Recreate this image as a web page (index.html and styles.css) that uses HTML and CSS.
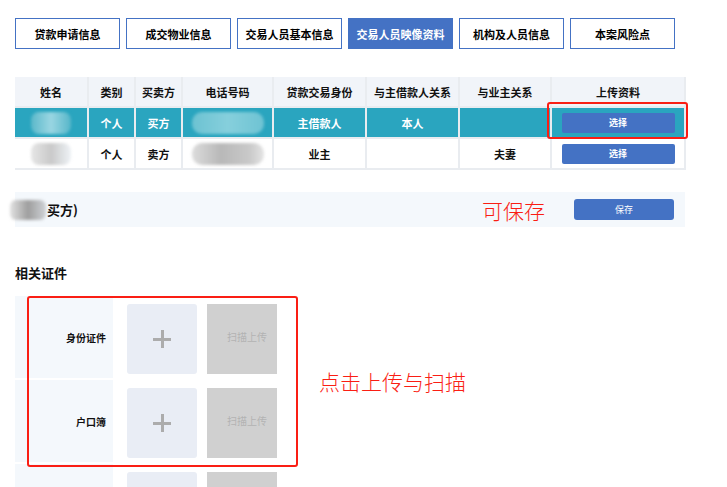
FILE: index.html
```html
<!DOCTYPE html>
<html lang="zh">
<head>
    <meta charset="UTF-8">
    <title>交易人员映像资料</title>
    <link rel="stylesheet" href="styles.css">
</head>
<body>
    <div class="tabs">
        <div class="tab">贷款申请信息</div>
        <div class="tab">成交物业信息</div>
        <div class="tab">交易人员基本信息</div>
        <div class="tab active">交易人员映像资料</div>
        <div class="tab">机构及人员信息</div>
        <div class="tab">本案风险点</div>
    </div>

    <div class="table-wrap">
        <table class="people">
            <colgroup>
                <col style="width:73px"><col style="width:47px"><col style="width:47px"><col style="width:91px">
                <col style="width:93px"><col style="width:93px"><col style="width:92px"><col style="width:134px">
            </colgroup>
            <tr>
                <th>姓名</th><th>类别</th><th>买卖方</th><th>电话号码</th>
                <th>贷款交易身份</th><th>与主借款人关系</th><th>与业主关系</th><th>上传资料</th>
            </tr>
            <tr class="selected">
                <td><span class="blur name-blur teal"></span></td>
                <td>个人</td><td>买方</td>
                <td><span class="blur phone-blur teal"></span></td>
                <td>主借款人</td><td>本人</td><td></td>
                <td><button class="btn">选择</button></td>
            </tr>
            <tr>
                <td><span class="blur name-blur"></span></td>
                <td>个人</td><td>卖方</td>
                <td><span class="blur phone-blur"></span></td>
                <td>业主</td><td></td><td>夫妻</td>
                <td><button class="btn">选择</button></td>
            </tr>
        </table>
        <div class="mark mark-btn"></div>
    </div>

    <div class="bar">
        <div class="bar-name"><span class="blur small-blur"></span>买方)</div>
        <div class="note note-save">可保存</div>
        <button class="btn btn-save">保存</button>
    </div>

    <h4 class="heading">相关证件</h4>

    <div class="cert-area">
        <div class="certs">
            <div class="cert-row">
                <div class="cert-label">身份证件</div>
                <div class="plus-box"><span class="plus"></span></div>
                <div class="scan-box">扫描上传</div>
            </div>
            <div class="cert-row">
                <div class="cert-label">户口簿</div>
                <div class="plus-box"><span class="plus"></span></div>
                <div class="scan-box">扫描上传</div>
            </div>
            <div class="cert-row">
                <div class="cert-label"></div>
                <div class="plus-box"><span class="plus"></span></div>
                <div class="scan-box"></div>
            </div>
            <div class="mark mark-certs"></div>
        </div>
        <div class="note note-upload">点击上传与扫描</div>
    </div>
</body>
</html>
```

FILE: styles.css
```css
body {
    margin: 0;
    padding: 18px 15px 0 15px;
    font-family: "Noto Sans CJK SC", "Liberation Sans", sans-serif;
    background-color: #fff;
    color: #111;
    overflow: hidden;
}

.tabs {
    display: flex;
    gap: 6px;
}

.tab {
    width: 105px;
    height: 31px;
    box-sizing: border-box;
    border: 1.5px solid #4472c4;
    display: flex;
    align-items: center;
    justify-content: center;
    font-size: 11px;
    font-weight: bold;
    color: #000;
}

.tab.active {
    background-color: #4472c4;
    color: #fff;
}

.table-wrap {
    position: relative;
    width: 670px;
    margin-top: 28px;
}

.people {
    width: 670px;
    border-collapse: collapse;
    table-layout: fixed;
    font-size: 11px;
    font-weight: bold;
}

.people th,
.people td {
    border: 2px solid #e9ecf0;
    text-align: center;
    padding: 0;
    height: 29px;
}

.people tr:first-child th {
    border-top: none;
}

.people th:first-child,
.people td:first-child {
    border-left: none;
}

.people th {
    background-color: #f1f4f9;
}

.people tr.selected td {
    background-color: #2aa5bf;
    color: #fff;
}

.blur {
    display: inline-block;
    vertical-align: middle;
    filter: blur(1.5px);
}

.name-blur {
    width: 40px;
    height: 22px;
    border-radius: 8px;
    background: linear-gradient(90deg, #e6e6e6 0%, #c9c9c9 50%, #eef2f6 100%);
}

.phone-blur {
    width: 72px;
    height: 22px;
    border-radius: 10px;
    background: linear-gradient(90deg, #dcdcdc 0%, #b8b8b8 40%, #c9c9c9 80%, #e4e4e4 100%);
}

.name-blur.teal {
    background: linear-gradient(90deg, #5bb8ca 0%, #9ad6e2 50%, #56b6c9 100%);
}

.phone-blur.teal {
    background: linear-gradient(90deg, #6cc2d2 0%, #86cfdc 50%, #6ec3d3 100%);
}

.btn {
    border: none;
    border-radius: 2px;
    background-color: #4472c4;
    color: #fff;
    font-family: inherit;
    font-size: 9px;
    font-weight: bold;
    width: 113px;
    height: 20px;
    padding: 0;
}

.mark {
    position: absolute;
    border: 2.5px solid #fa1e14;
    border-radius: 3px;
}

.mark-btn {
    left: 532px;
    top: 25px;
    width: 137px;
    height: 33px;
}

.bar {
    width: 670px;
    height: 35px;
    margin-top: 22px;
    background-color: #f4f8fc;
    display: flex;
    align-items: center;
}

.bar-name {
    font-size: 13px;
    font-weight: bold;
    display: flex;
    align-items: center;
    margin-left: -5px;
}

.small-blur {
    width: 36px;
    height: 20px;
    margin-right: 1px;
    border-radius: 6px;
    background: linear-gradient(90deg, #e2e2e2 0%, #9e9e9e 50%, #cfd2d6 100%);
}

.note {
    color: #fa1e14;
    font-size: 21px;
    font-weight: 300;
}

.note-save {
    margin-left: auto;
    margin-right: 29px;
}

.btn-save {
    width: 100px;
    height: 21px;
    margin-right: 11px;
    border-radius: 3px;
    font-weight: normal;
}

.heading {
    font-size: 13px;
    margin: 36px 0 14px 0;
}

.cert-area {
    display: flex;
    align-items: flex-start;
}

.certs {
    position: relative;
    display: flex;
    flex-direction: column;
    gap: 2px;
}

.cert-row {
    display: flex;
    height: 82px;
    gap: 10px;
}

.cert-label {
    width: 98px;
    background-color: #f4f8fc;
    box-sizing: border-box;
    padding-right: 7px;
    display: flex;
    align-items: center;
    justify-content: flex-end;
    font-size: 10px;
    font-weight: bold;
    margin-right: 4px;
}

.plus-box,
.scan-box {
    width: 70px;
    height: 70px;
    margin-top: 8px;
}

.plus-box {
    background-color: #e9edf5;
    border-radius: 3px;
    display: flex;
    align-items: center;
    justify-content: center;
}

.plus {
    position: relative;
    width: 18px;
    height: 3px;
    background-color: #acacac;
}

.plus::after {
    content: "";
    position: absolute;
    left: 7.5px;
    top: -7.5px;
    width: 3px;
    height: 18px;
    background-color: #acacac;
}

.scan-box {
    background-color: #d0d0d0;
    color: #b3b3b3;
    font-size: 10px;
    display: flex;
    align-items: center;
    justify-content: center;
    padding: 0 0 6px 10px;
    box-sizing: border-box;
}

.mark-certs {
    left: 12px;
    top: 0;
    width: 267px;
    height: 167px;
}

.note-upload {
    margin: 70px 0 0 42px;
}
```
